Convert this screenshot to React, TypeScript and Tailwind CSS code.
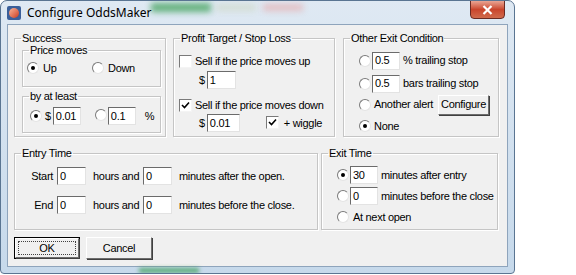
import React from "react";

function Radio({ checked }: { checked?: boolean }) {
  return (
    <span className="inline-flex shrink-0 w-[12px] h-[12px] rounded-full border border-t-[#7a7a7a] border-l-[#7a7a7a] border-r-[#e4e4e4] border-b-[#e4e4e4] bg-white items-center justify-center">
      {checked && <span className="w-[4px] h-[4px] rounded-full bg-black" />}
    </span>
  );
}

function Check({ checked }: { checked?: boolean }) {
  return (
    <span className="inline-flex shrink-0 w-[13px] h-[13px] border border-t-[#7a7a7a] border-l-[#7a7a7a] border-r-[#f4f4f4] border-b-[#f4f4f4] bg-white items-center justify-center">
      {checked && (
        <svg width="9" height="9" viewBox="0 0 9 9">
          <path d="M1 4 L3.5 6.5 L8 1.5" stroke="#000" strokeWidth="1.6" fill="none" />
        </svg>
      )}
    </span>
  );
}

function Input({ value, w }: { value: string; w: string }) {
  return (
    <span
      className={`inline-flex shrink-0 items-center ${w} h-[18px] bg-white border border-t-[#6b6b6b] border-l-[#6b6b6b] border-r-[#e3e3e3] border-b-[#e3e3e3] pl-[2px] text-[11px] leading-none`}
    >
      {value}
    </span>
  );
}

function Group({
  title,
  className,
  inner,
  children,
}: {
  title: string;
  className: string;
  inner?: string;
  children?: React.ReactNode;
}) {
  return (
    <fieldset
      className={`shrink-0 p-0 border border-[#c5c5c5] shadow-[inset_1px_1px_0_#ffffff,1px_1px_0_#ffffff] ${className}`}
    >
      <legend className="ml-[6px] px-[1px] text-[11px] leading-[13px]">{title}</legend>
      <div className={inner ?? ""}>{children}</div>
    </fieldset>
  );
}

function Btn({ label, className }: { label: string; className: string }) {
  return (
    <span
      className={`inline-flex shrink-0 items-center justify-center bg-[#f0f0f0] border border-t-white border-l-white border-r-[#6d6d6d] border-b-[#6d6d6d] shadow-[1px_1px_0_#404040] text-[11px] ${className}`}
    >
      {label}
    </span>
  );
}

export default function App() {
  return (
    <div className="w-[576px] h-[275px] bg-white overflow-hidden font-['Liberation_Sans',Arial,sans-serif] text-black">
      <div className="relative w-[515px] h-[274px] rounded-t-[7px] rounded-b-[4px] border border-[#5a7592] bg-gradient-to-b from-[#dfe9f3] to-[#c6d9eb] flex flex-col overflow-hidden">
        {/* blurred background seen through glass */}
        <div className="absolute left-[150px] top-[2px] w-[60px] h-[9px] bg-[#2f9a4a] blur-[3px] opacity-70" />
        <div className="absolute left-[215px] top-[3px] w-[40px] h-[7px] bg-[#cfd9c8] blur-[3px] opacity-70" />
        <div className="absolute left-[262px] top-[3px] w-[40px] h-[7px] bg-[#e6a3a3] blur-[3px] opacity-60" />
        <div className="absolute left-[138px] bottom-[0px] w-[60px] h-[5px] bg-[#2f9a4a] blur-[2px] opacity-70" />
        {/* title bar */}
        <div className="relative h-[23px] flex items-center pl-[6px]">
          <span className="w-[14px] h-[14px] rounded-[2px] bg-[#3a5f9a] flex items-center justify-center">
            <span className="w-[10px] h-[10px] rounded-full bg-gradient-to-br from-[#f7b59a] to-[#c8351a]" />
          </span>
          <span className="ml-[6px] text-[12px] font-['Noto_Sans',sans-serif] text-black">Configure OddsMaker</span>
          <span className="absolute right-[9px] top-[-1px] w-[35px] h-[19px] rounded-b-[4px] border border-[#6a2a22] bg-gradient-to-b from-[#e8a493] via-[#c9452c] to-[#d06a4c] flex items-center justify-center">
            <svg width="11" height="10" viewBox="0 0 11 10">
              <path d="M1.5 1 L9.5 9 M9.5 1 L1.5 9" stroke="#fff" strokeWidth="2.2" />
            </svg>
          </span>
        </div>
        {/* client area */}
        <div className="mx-[6px] mb-[6px] flex-1 border border-[#8ea4bc] bg-[#f0f0f0] pl-[6px] pt-[7px] text-[11px] leading-[13px] tracking-[-0.3px] whitespace-nowrap">
          <div className="flex h-[105px]">
            <Group title="Success" className="w-[151px] h-[105px]" inner="pl-[7px] pr-[4px]">
              <Group title="Price moves" className="w-[139px] h-[43px] mt-[-1px]">
                <div className="flex items-center h-[20px] pl-[4px] mt-[1px]">
                  <Radio checked />
                  <span className="ml-[4px] w-[49px]">Up</span>
                  <Radio />
                  <span className="ml-[4px]">Down</span>
                </div>
              </Group>
              <Group title="by at least" className="w-[139px] h-[43px] mt-[3px]">
                <div className="flex items-center h-[22px] pl-[7px] mt-[2px]">
                  <Radio checked />
                  <span className="ml-[3px] mr-[2px]">$</span>
                  <Input value="0.01" w="w-[28px]" />
                  <span className="ml-[14px]">
                    <Radio />
                  </span>
                  <span className="ml-[1px]">
                    <Input value="0.1" w="w-[28px]" />
                  </span>
                  <span className="ml-[9px]">%</span>
                </div>
              </Group>
            </Group>
            <Group title="Profit Target / Stop Loss" className="ml-[7px] w-[162px] h-[105px]" inner="pl-[5px]">
              <div className="flex items-center h-[14px] mt-[9px]">
                <Check />
                <span className="ml-[3px]">Sell if the price moves up</span>
              </div>
              <div className="flex items-center h-[18px] mt-[3px] pl-[20px]">
                <span className="mr-[2px]">$</span>
                <Input value="1" w="w-[29px]" />
              </div>
              <div className="flex items-center h-[14px] mt-[9px]">
                <Check checked />
                <span className="ml-[3px]">Sell if the price moves down</span>
              </div>
              <div className="flex items-center h-[18px] mt-[2px] pl-[20px]">
                <span className="mr-[2px]">$</span>
                <Input value="0.01" w="w-[33px]" />
                <span className="ml-[26px]">
                  <Check checked />
                </span>
                <span className="ml-[5px]">+ wiggle</span>
              </div>
            </Group>
            <Group title="Other Exit Condition" className="ml-[8px] w-[156px] h-[105px]" inner="pl-[15px]">
              <div className="flex items-center h-[19px] mt-[6px]">
                <Radio />
                <span className="ml-[1px]">
                  <Input value="0.5" w="w-[28px]" />
                </span>
                <span className="ml-[3px]">% trailing stop</span>
              </div>
              <div className="flex items-center h-[19px] mt-[4px]">
                <Radio />
                <span className="ml-[1px]">
                  <Input value="0.5" w="w-[28px]" />
                </span>
                <span className="ml-[3px]">bars trailing stop</span>
              </div>
              <div className="flex items-center h-[21px] mt-[1px]">
                <Radio />
                <span className="ml-[3px] w-[64px]">Another alert</span>
                <Btn label="Configure" className="w-[51px] h-[20px]" />
              </div>
              <div className="flex items-center h-[16px] mt-[3px]">
                <Radio checked />
                <span className="ml-[3px]">None</span>
              </div>
            </Group>
          </div>
          <div className="flex h-[83px] mt-[10px]">
            <Group title="Entry Time" className="w-[304px] h-[83px]" inner="pl-[10px]">
              <div className="flex items-center h-[18px] mt-[7px]">
                <span className="w-[32px] text-right pr-[4px]">Start</span>
                <Input value="0" w="w-[29px]" />
                <span className="ml-[7px] w-[50px]">hours and</span>
                <Input value="0" w="w-[29px]" />
                <span className="ml-[7px]">minutes after the open.</span>
              </div>
              <div className="flex items-center h-[18px] mt-[11px]">
                <span className="w-[32px] text-right pr-[4px]">End</span>
                <Input value="0" w="w-[29px]" />
                <span className="ml-[7px] w-[50px]">hours and</span>
                <Input value="0" w="w-[29px]" />
                <span className="ml-[7px]">minutes before the close.</span>
              </div>
            </Group>
            <Group title="Exit Time" className="ml-[3px] w-[177px] h-[83px]" inner="pl-[15px]">
              <div className="flex items-center h-[18px] mt-[6px]">
                <Radio checked />
                <span className="ml-[1px]">
                  <Input value="30" w="w-[28px]" />
                </span>
                <span className="ml-[3px]">minutes after entry</span>
              </div>
              <div className="flex items-center h-[18px] mt-[3px]">
                <Radio />
                <span className="ml-[1px]">
                  <Input value="0" w="w-[28px]" />
                </span>
                <span className="ml-[3px]">minutes before the close</span>
              </div>
              <div className="flex items-center h-[14px] mt-[5px]">
                <Radio />
                <span className="ml-[4px]">At next open</span>
              </div>
            </Group>
          </div>
          <div className="flex mt-[7px]">
            <span className="border border-black">
              <Btn label="OK" className="w-[64px] h-[20px] outline-1 outline-dotted outline-[#404040] -outline-offset-4" />
            </span>
            <Btn label="Cancel" className="ml-[6px] w-[66px] h-[22px]" />
          </div>
        </div>
      </div>
    </div>
  );
}
